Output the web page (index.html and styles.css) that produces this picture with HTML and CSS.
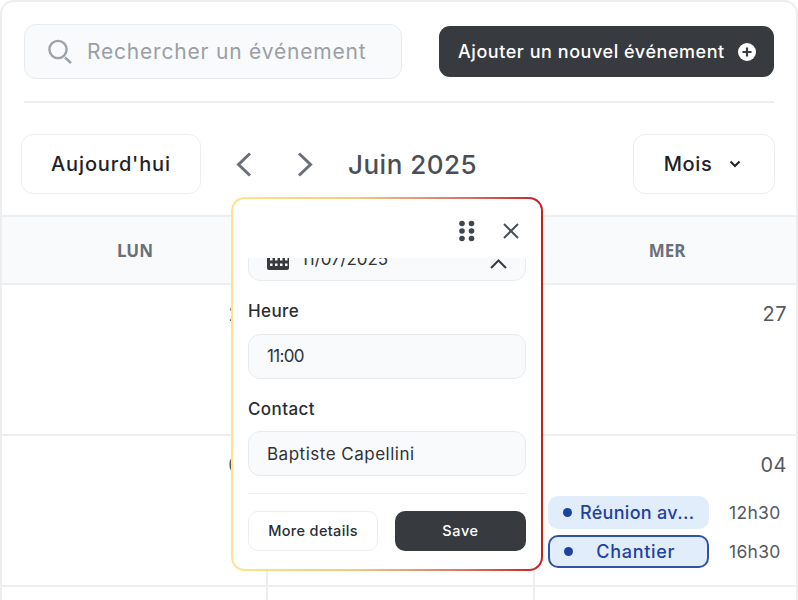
FILE: index.html
```html
<!DOCTYPE html>
<html lang="fr">
<head>
  <meta charset="utf-8">
  <title>Calendrier</title>
  <link rel="stylesheet" href="styles.css">
</head>
<body>
  <div class="frame">
    <div class="toolbar">
      <div class="search">
        <svg class="search-icon" width="26" height="26" viewBox="0 0 26 26"><circle cx="11" cy="10.5" r="8.6"/><path d="M18 18.5l6 5.5"/></svg>
        <span>Rechercher un événement</span>
      </div>
      <button class="add-btn">
        <span>Ajouter un nouvel événement</span>
        <svg width="18" height="18" viewBox="0 0 18 18"><circle cx="9" cy="9" r="9" fill="#fff"/><path d="M9 4.500v9M4.500 9h9" stroke="#373a3e" stroke-width="2.200"/></svg>
      </button>
    </div>

    <div class="nav">
      <button class="today">Aujourd'hui</button>
      <svg class="arrow" width="16" height="25" viewBox="0 0 16 25"><path d="M14 1.500L2.500 12.500 14 23.500"/></svg>
      <svg class="arrow arrow-next" width="16" height="25" viewBox="0 0 16 25"><path d="M2 1.500l11.500 11L2 23.500"/></svg>
      <div class="month">Juin 2025</div>
      <button class="view">
        <span>Mois</span>
        <svg width="12" height="8" viewBox="0 0 12 8"><path d="M1.500 1.500L6 6l4.500-4.500" fill="none" stroke="#1f2328" stroke-width="2"/></svg>
      </button>
    </div>

    <div class="cal">
      <div class="head-cell">LUN</div>
      <div class="head-cell">MAR</div>
      <div class="head-cell">MER</div>

      <div class="day"><div class="num">26</div></div>
      <div class="day"><div class="num">27</div></div>
      <div class="day"><div class="num">27</div></div>

      <div class="day"><div class="num">02</div></div>
      <div class="day"><div class="num">03</div></div>
      <div class="day">
        <div class="num">04</div>
        <div class="event">
          <div class="chip"><i class="dot"></i><span>Réunion av...</span></div>
          <div class="time">12h30</div>
        </div>
        <div class="event">
          <div class="chip chip-active"><i class="dot"></i><span class="chip-center">Chantier</span></div>
          <div class="time">16h30</div>
        </div>
      </div>

      <div class="day"></div>
      <div class="day"></div>
      <div class="day"></div>
    </div>

    <div class="popup">
      <div class="popup-top">
        <svg width="18" height="22" viewBox="0 0 18 22" fill="#3f4650"><circle cx="4" cy="3.500" r="2.800"/><circle cx="13.500" cy="3.500" r="2.800"/><circle cx="4" cy="11" r="2.800"/><circle cx="13.500" cy="11" r="2.800"/><circle cx="4" cy="18.500" r="2.800"/><circle cx="13.500" cy="18.500" r="2.800"/></svg>
        <svg class="close" width="16" height="16" viewBox="0 0 16 16"><path d="M1 1l14 14M15 1L1 15"/></svg>
      </div>
      <div class="date-clip">
        <div class="field date-field">
          <svg class="cal-icon" width="22" height="22" viewBox="0 0 22 22"><rect y="1" width="22" height="21" rx="2" fill="#373a3e"/><g fill="#fff"><rect x="3" y="10" width="2.500" height="2.500"/><rect x="8" y="10" width="2.500" height="2.500"/><rect x="13" y="10" width="2.500" height="2.500"/><rect x="18" y="10" width="2.500" height="2.500"/><rect x="3" y="15.500" width="2.500" height="2.500"/><rect x="8" y="15.500" width="2.500" height="2.500"/><rect x="13" y="15.500" width="2.500" height="2.500"/><rect x="18" y="15.500" width="2.500" height="2.500"/></g></svg>
          <span class="date-text">11/07/2025</span>
          <svg class="chev-up" width="18" height="11" viewBox="0 0 18 11"><path d="M2 10L9.500 2.500 17 10" fill="none" stroke="#373a3e" stroke-width="2"/></svg>
        </div>
      </div>
      <label class="label">Heure</label>
      <div class="field"><span class="time-text">11:00</span></div>
      <label class="label">Contact</label>
      <div class="field">Baptiste Capellini</div>
      <div class="popup-actions">
        <button class="more">More details</button>
        <button class="save">Save</button>
      </div>
    </div>
  </div>
</body>
</html>
```

FILE: styles.css
```css
* {
  box-sizing: border-box;
}

body {
  margin: 0;
  height: 600px;
  overflow: hidden;
  background: #fff;
  font-family: Inter, "Noto Sans", sans-serif;
  color: #1f2328;
}

button {
  font-family: inherit;
  cursor: pointer;
}

.frame {
  position: relative;
  width: 798px;
  height: 600px;
  overflow: hidden;
  border: 2px solid #eceef0;
  border-bottom: 0;
  border-radius: 14px 14px 0 0;
  background: #fff;
}

/* top bar */
.toolbar {
  display: flex;
  align-items: center;
  justify-content: space-between;
  height: 101px;
  margin: 0 22px;
  border-bottom: 2px solid #eceef0;
}

.search {
  display: flex;
  align-items: center;
  gap: 14px;
  width: 378px;
  height: 55px;
  padding-left: 22px;
  background: #f8fafc;
  border: 1.500px solid #e8ebee;
  border-radius: 12px;
  font-size: 21px;
  letter-spacing: 0.800px;
  color: #9b9fa5;
}

.search-icon {
  fill: none;
  stroke: #9ca3a9;
  stroke-width: 2.400;
}

.add-btn {
  display: flex;
  align-items: center;
  justify-content: space-between;
  width: 335px;
  height: 51px;
  padding: 0 18px 0 19px;
  background: #373a3e;
  border: 0;
  border-radius: 11px;
  color: #fff;
  font-size: 18px;
  font-weight: 500;
  letter-spacing: 0.550px;
}

/* month nav */
.nav {
  display: flex;
  align-items: center;
  height: 60px;
  margin-top: 31px;
  padding: 0 21px 0 19px;
}

.today,
.view {
  height: 60px;
  background: #fff;
  border: 1.500px solid #eceef0;
  border-radius: 12px;
  color: #1f2328;
  font-size: 20px;
  font-weight: 500;
}

.today {
  width: 180px;
  letter-spacing: 0.850px;
}

.arrow {
  margin-left: 35px;
  fill: none;
  stroke: #6b7078;
  stroke-width: 3;
}

.arrow-next {
  margin-left: 45px;
}

.month {
  margin-left: 35px;
  font-size: 26px;
  font-weight: 500;
  letter-spacing: 0.500px;
  color: #4b4f55;
}

.view {
  display: flex;
  align-items: center;
  justify-content: center;
  gap: 17px;
  width: 142px;
  margin-left: auto;
  padding: 0 3px 0 0;
  letter-spacing: 0.600px;
}

/* calendar grid */
.cal {
  display: grid;
  grid-template-columns: 266px 267px 1fr;
  grid-template-rows: 68px 151px 151px 20px;
  margin-top: 21px;
  border-top: 2px solid #eceef0;
}

.head-cell {
  display: flex;
  align-items: center;
  justify-content: center;
  background: #f8fafc;
  border-bottom: 2px solid #eceef0;
  font-family: "Noto Sans", sans-serif;
  font-size: 17px;
  font-weight: 700;
  color: #6b7078;
}

.head-cell:nth-child(3) {
  padding-left: 3px;
}

.day {
  padding: 17px 12px 0 13px;
  border-bottom: 2px solid #eceef0;
  border-right: 2px solid #eceef0;
}

.day:nth-child(3n) {
  padding-right: 9px;
  border-right: 0;
}

.num {
  text-align: right;
  font-size: 20px;
  letter-spacing: 0.500px;
  color: #55595f;
}

.event {
  display: flex;
  align-items: center;
  gap: 20px;
  margin-bottom: 6px;
}

.day .num + .event {
  margin-top: 19px;
}

.chip {
  display: flex;
  align-items: center;
  flex: none;
  width: 161px;
  height: 33px;
  padding-left: 15px;
  background: #e2edfc;
  border-radius: 10px;
  color: #1e429f;
  font-size: 18px;
  font-weight: 500;
  letter-spacing: 0.300px;
  white-space: nowrap;
}

.chip-active {
  border: 2px solid #2f52a8;
  padding-left: 13.500px;
  letter-spacing: 0.700px;
}

.chip-center {
  flex: 1;
  text-align: center;
  padding-right: 16px;
}

.dot {
  flex: none;
  width: 9px;
  height: 9px;
  margin-right: 8px;
  border-radius: 50%;
  background: #1e429f;
}

.time {
  font-size: 17.500px;
  letter-spacing: 0.300px;
  color: #55595f;
}

/* floating form */
.popup {
  position: absolute;
  left: 229px;
  top: 195px;
  width: 312px;
  height: 374px;
  padding: 0 15px;
  background: linear-gradient(#fff, #fff) padding-box,
    linear-gradient(90deg, #fde68a 0%, #f3c97c 40%, #d9736a 75%, #c81e1e 100%) border-box;
  border: 2px solid transparent;
  border-radius: 14px;
}

.popup-top {
  display: flex;
  align-items: center;
  justify-content: flex-end;
  gap: 27px;
  height: 59px;
  padding: 5px 0 0;
}

.close {
  margin-right: 7px;
  fill: none;
  stroke: #4b5058;
  stroke-width: 2;
}

.date-clip {
  display: flex;
  flex-direction: column;
  justify-content: flex-end;
  height: 23px;
  overflow: hidden;
}

.field {
  display: flex;
  align-items: center;
  flex: none;
  height: 45px;
  padding-left: 18px;
  background: #f8fafc;
  border: 1.500px solid #e8ebee;
  border-radius: 12px;
  font-size: 17px;
  letter-spacing: 0.500px;
  color: #2f3338;
}

.cal-icon {
  flex: none;
}

.date-text {
  margin-left: 12px;
  letter-spacing: -0.100px;
}

.time-text {
  letter-spacing: -0.700px;
}

.chev-up {
  margin: 9px 18px 0 auto;
}

.label {
  display: block;
  margin: 20px 0 12.500px;
  font-size: 17px;
  font-weight: 500;
  letter-spacing: 0.400px;
  line-height: 20px;
  color: #2a2e33;
}

.popup-actions {
  display: flex;
  justify-content: space-between;
  margin-top: 17px;
  padding-top: 16.500px;
  border-top: 1.500px solid #eceef0;
}

.more,
.save {
  height: 40px;
  border-radius: 10px;
  font-size: 14.500px;
  font-weight: 500;
}

.more {
  width: 130px;
  background: #fff;
  border: 1.500px solid #eceef0;
  color: #2a2e33;
  letter-spacing: 0.350px;
}

.save {
  width: 131px;
  background: #373a3e;
  border: 0;
  color: #fff;
  letter-spacing: 0.600px;
}
```
